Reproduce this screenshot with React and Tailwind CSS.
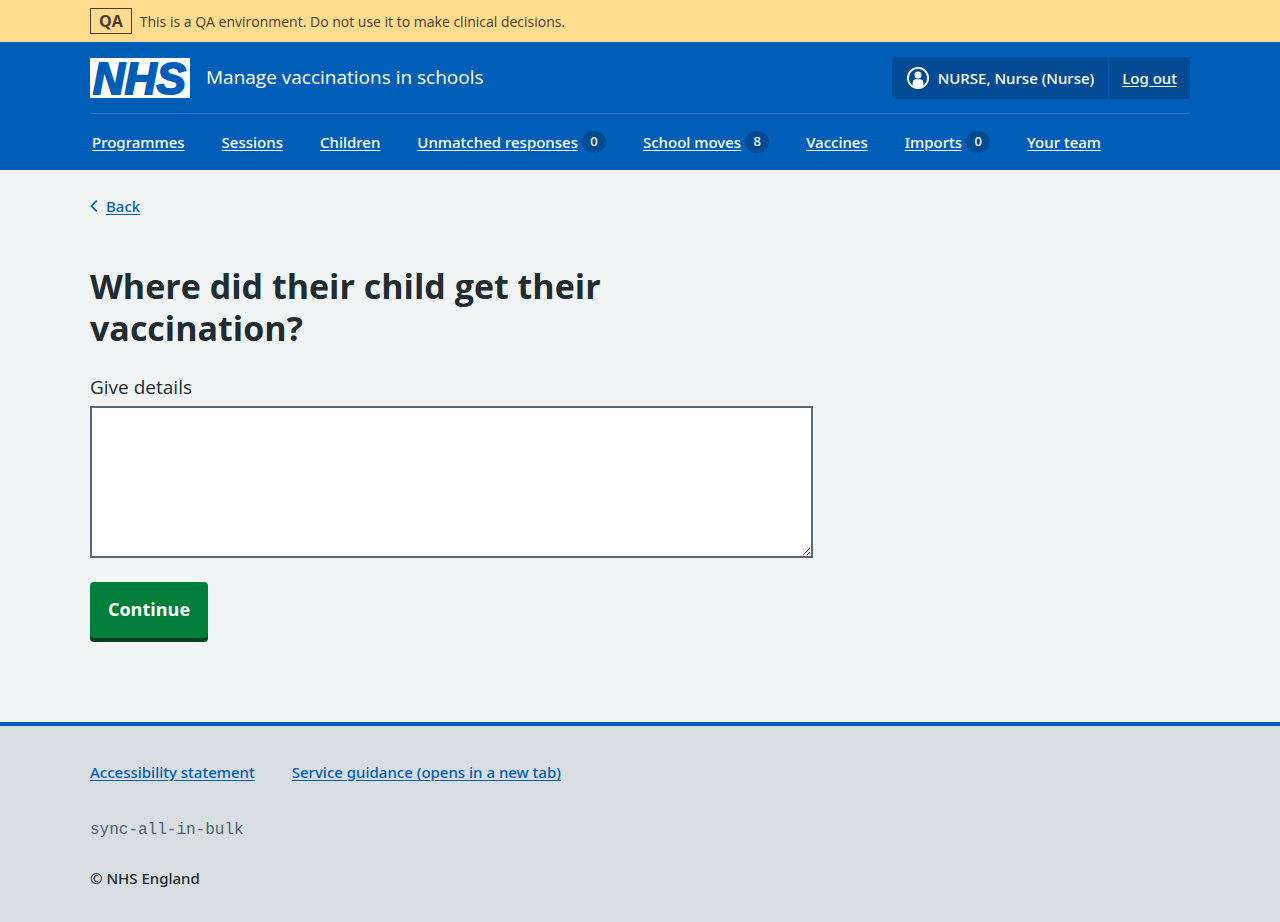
const navItems = [
  { label: "Programmes" },
  { label: "Sessions" },
  { label: "Children" },
  { label: "Unmatched responses", count: 0 },
  { label: "School moves", count: 8 },
  { label: "Vaccines" },
  { label: "Imports", count: 0 },
  { label: "Your team" },
];

function Container({ className = "", children }) {
  return <div className={`mx-auto max-w-[1164px] px-8 ${className}`}>{children}</div>;
}

function Logo() {
  return (
    <svg className="h-10 w-[100px] shrink-0 overflow-visible" viewBox="0 0 100 40" role="img" aria-label="NHS">
      <rect width="100" height="40" fill="#fff" />
      <text
        x="3"
        y="35.5"
        fill="#005eb8"
        stroke="#005eb8"
        strokeWidth="2"
        className="font-['Liberation_Sans',sans-serif] text-[44px] font-bold italic"
      >
        NHS
      </text>
    </svg>
  );
}

function UserIcon() {
  return (
    <svg className="size-6 shrink-0" viewBox="0 0 24 24" aria-hidden="true">
      <circle cx="12" cy="12" r="10.1" fill="none" stroke="#fff" strokeWidth="1.8" />
      <circle cx="12" cy="9" r="3.500" fill="#fff" />
      <path d="M6.700 20v-3.200a3.500 3.500 0 0 1 3.500-3.500h3.600a3.500 3.500 0 0 1 3.500 3.500V20A9.800 9.800 0 0 1 12 22a9.800 9.800 0 0 1-5.300-2z" fill="#fff" />
    </svg>
  );
}

function EnvironmentBanner() {
  return (
    <div className="bg-[#ffdc8e] text-[#4d3c32]">
      <Container className="flex items-center gap-2 py-2">
        <strong className="border border-[#4d3c32] px-2 text-base leading-6 font-bold">QA</strong>
        <span className="pt-px text-sm leading-6">
          This is a QA environment. Do not use it to make clinical decisions.
        </span>
      </Container>
    </div>
  );
}

function Header() {
  return (
    <header className="bg-[#005eb8] text-white">
      <Container>
        <div className="flex items-center justify-between border-b border-white/15 pt-[15px] pb-[14px]">
          <a href="#home" className="flex items-center gap-4 text-[19px] leading-7">
            <Logo />
            <span className="pb-0.5">Manage vaccinations in schools</span>
          </a>
          <div className="flex h-[42px] rounded bg-[#004b93] font-['Noto_Sans',sans-serif] text-[15px] font-medium">
            <div className="flex items-center gap-2 border-r border-[#005eb8] px-[14px]">
              <UserIcon />
              <span>NURSE, Nurse (Nurse)</span>
            </div>
            <a href="#logout" className="flex items-center px-[13px] underline underline-offset-2">
              Log out
            </a>
          </div>
        </div>
        <nav aria-label="Menu">
          <ul className="flex flex-wrap gap-x-[37px] px-0.5 font-['Noto_Sans',sans-serif] text-[15px] font-medium">
            {navItems.map((item) => (
              <li key={item.label} className="flex h-14 items-center gap-1">
                <a href="#nav" className="underline underline-offset-2">
                  {item.label}
                </a>
                {item.count !== undefined && (
                  <span className="flex h-[22px] w-6 items-center justify-center rounded-full bg-[#004b93] text-[13px]">
                    {item.count}
                  </span>
                )}
              </li>
            ))}
          </ul>
        </nav>
      </Container>
    </header>
  );
}

export default function App() {
  return (
    <div className="flex min-h-screen flex-col bg-[#f0f4f5] font-['Open_Sans','Noto_Sans',sans-serif] text-[#212b32]">
      <EnvironmentBanner />
      <Header />
      <Container className="w-full grow pt-6 pb-20">
        <a href="#back" className="inline-flex items-center gap-2 font-['Noto_Sans',sans-serif] text-[15px] leading-6 font-medium text-[#005eb8]">
          <svg className="h-3 w-2" viewBox="0 0 8 12" fill="none" stroke="currentColor" strokeWidth="1.700" aria-hidden="true">
            <path d="M6.800 0.600 1.400 6l5.400 5.400" />
          </svg>
          <span className="underline underline-offset-2">Back</span>
        </a>
        <main className="max-w-[723px] pt-[47px]">
          <form onSubmit={(event) => event.preventDefault()}>
            <h1 className="max-w-[600px] text-[34px] leading-[42px] font-bold">
              Where did their child get their vaccination?
            </h1>
            <label htmlFor="details" className="mt-6 block text-[19px] leading-7">
              Give details
            </label>
            <textarea
              id="details"
              rows={5}
              className="mt-[5px] block h-[152px] w-full resize-y border-2 border-[#5b6878] bg-white p-1 text-[19px]"
            />
            <button
              type="submit"
              className="mt-6 h-14 rounded bg-[#007f3b] px-[18px] pb-0.5 text-lg font-bold text-white shadow-[0_4px_0_#00401e]"
            >
              Continue
            </button>
          </form>
        </main>
      </Container>
      <footer className="border-t-4 border-[#005eb8] bg-[#d8dde0]">
        <Container className="py-8 font-['Noto_Sans',sans-serif] text-[15px] leading-7 font-medium">
          <ul className="flex flex-wrap gap-x-[37px] text-[#005eb8]">
            <li>
              <a href="#accessibility" className="underline underline-offset-2">Accessibility statement</a>
            </li>
            <li>
              <a href="#guidance" className="underline underline-offset-2">Service guidance (opens in a new tab)</a>
            </li>
          </ul>
          <p className="mt-[30px] font-['Liberation_Mono',monospace] text-base leading-7 font-normal text-[#4c6272]">sync-all-in-bulk</p>
          <p className="mt-5 -mb-0.5">© NHS England</p>
        </Container>
      </footer>
    </div>
  );
}
